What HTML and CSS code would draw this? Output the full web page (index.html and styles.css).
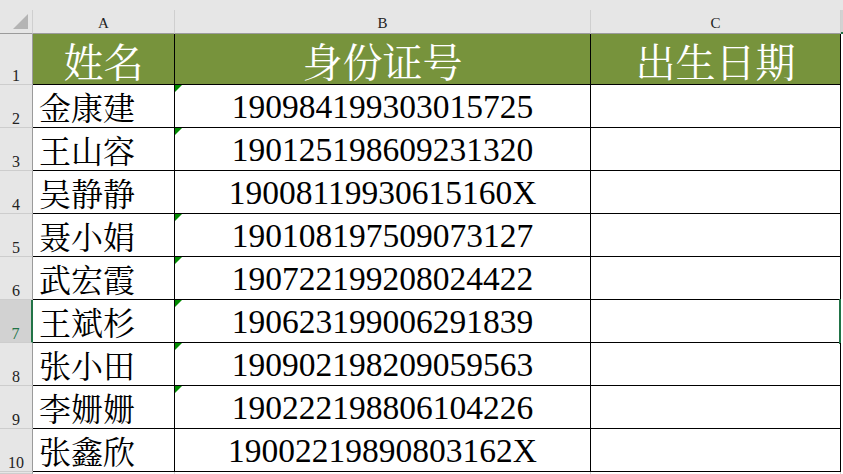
FILE: index.html
```html
<!DOCTYPE html>
<html lang="zh-CN">
  <head>
    <meta charset="UTF-8" />
    <title>身份证号 - 出生日期</title>
    <link rel="stylesheet" href="styles.css">
  </head>
  <body>
    <div class="sheet">
      <div class="strip"></div>

      <div class="row">
        <div class="corner"><span class="corner-mark"></span></div>
        <div class="col-head">A</div>
        <div class="col-head">B</div>
        <div class="col-head">C</div>
        <div class="col-head col-sel"></div>
      </div>

      <div class="row">
        <div class="row-head">1</div>
        <div class="cell title">姓名</div>
        <div class="cell title">身份证号</div>
        <div class="cell title">出生日期</div>
        <div class="pad"></div>
      </div>

      <div class="row">
        <div class="row-head">2</div>
        <div class="cell name">金康建</div>
        <div class="cell id txt">190984199303015725</div>
        <div class="cell"></div>
        <div class="pad"></div>
      </div>

      <div class="row">
        <div class="row-head">3</div>
        <div class="cell name">王山容</div>
        <div class="cell id txt">190125198609231320</div>
        <div class="cell"></div>
        <div class="pad"></div>
      </div>

      <div class="row">
        <div class="row-head">4</div>
        <div class="cell name">吴静静</div>
        <div class="cell id">19008119930615160X</div>
        <div class="cell"></div>
        <div class="pad"></div>
      </div>

      <div class="row">
        <div class="row-head">5</div>
        <div class="cell name">聂小娟</div>
        <div class="cell id txt">190108197509073127</div>
        <div class="cell"></div>
        <div class="pad"></div>
      </div>

      <div class="row">
        <div class="row-head">6</div>
        <div class="cell name">武宏霞</div>
        <div class="cell id txt">190722199208024422</div>
        <div class="cell"></div>
        <div class="pad"></div>
      </div>

      <div class="row">
        <div class="row-head row-sel">7</div>
        <div class="cell name">王斌杉</div>
        <div class="cell id txt">190623199006291839</div>
        <div class="cell"></div>
        <div class="pad active"></div>
      </div>

      <div class="row">
        <div class="row-head">8</div>
        <div class="cell name">张小田</div>
        <div class="cell id txt">190902198209059563</div>
        <div class="cell"></div>
        <div class="pad"></div>
      </div>

      <div class="row">
        <div class="row-head">9</div>
        <div class="cell name">李姗姗</div>
        <div class="cell id txt">190222198806104226</div>
        <div class="cell"></div>
        <div class="pad"></div>
      </div>

      <div class="row">
        <div class="row-head">10</div>
        <div class="cell name">张鑫欣</div>
        <div class="cell id">19002219890803162X</div>
        <div class="cell"></div>
        <div class="pad"></div>
      </div>

      <div class="row">
        <div class="row-head"></div>
        <div class="cell empty"></div>
        <div class="cell empty"></div>
        <div class="cell empty"></div>
        <div class="pad"></div>
      </div>
    </div>
  </body>
</html>
```

FILE: styles.css
```css
* {
  box-sizing: border-box;
}

body {
  margin: 0;
  height: 474px;
  overflow: hidden;
  background: #fff;
  font-family: "Liberation Serif", "Times New Roman", serif;
}

.sheet {
  display: grid;
  grid-template-columns: 33px 142px 416px 250px 1fr;
  grid-template-rows: 10px 24px 51px repeat(9, 43px) 1fr;
  height: 474px;
}

.row {
  display: contents;
}

.strip {
  grid-column: 1 / -1;
  background: #e6e6e6;
}

/* headers */
.corner {
  display: flex;
  justify-content: flex-end;
  align-items: flex-end;
  padding: 0 4px 4px 0;
  background: #e6e6e6;
  border-right: 1px solid #cfcfcf;
  border-bottom: 1px solid #9b9b9b;
}

.corner-mark {
  width: 0;
  height: 0;
  border-left: 15px solid transparent;
  border-bottom: 15px solid #b4b4b4;
}

.col-head {
  display: flex;
  justify-content: center;
  align-items: flex-end;
  padding-bottom: 2px;
  background: #e6e6e6;
  border-right: 1px solid #cfcfcf;
  border-bottom: 1px solid #9b9b9b;
  color: #222;
  font-size: 15px;
  line-height: 1;
}

.col-sel {
  background: #d2d2d2;
  border-right: none;
  border-bottom: 2px solid #217346;
}

.row-head {
  display: flex;
  justify-content: center;
  align-items: flex-end;
  background: #e6e6e6;
  border-right: 1px solid #9b9b9b;
  border-bottom: 1px solid #cdcdcd;
  color: #222;
  font-size: 16px;
  line-height: 1;
}

.row-sel {
  background: #d2d2d2;
  color: #217346;
  border-right: 2px solid #217346;
}

/* cells */
.cell {
  position: relative;
  display: flex;
  align-items: flex-end;
  border-right: 1px solid #000;
  border-bottom: 1px solid #000;
  color: #000;
}

.cell.empty {
  border-right-color: #d4d4d4;
  border-bottom: none;
}

.title {
  justify-content: center;
  padding-bottom: 4px;
  background: #77933c;
  color: #fff;
  font-family: "Noto Serif CJK SC", "Noto Sans CJK SC", sans-serif;
  font-size: 40px;
  line-height: 1;
}

.name {
  padding: 0 0 5px 6px;
  font-family: "Noto Serif CJK SC", "Noto Sans CJK SC", sans-serif;
  font-size: 32px;
  line-height: 1;
}

.id {
  justify-content: center;
  padding-bottom: 4px;
  font-size: 33.5px;
  line-height: 1;
}

/* number stored as text */
.txt::before {
  content: "";
  position: absolute;
  top: 0;
  left: 0;
  border-top: 7px solid #008a00;
  border-right: 7px solid transparent;
}

.pad {
  position: relative;
}

.active::before {
  content: "";
  position: absolute;
  top: -1px;
  bottom: -1px;
  left: -2px;
  width: 2px;
  background: #217346;
}
```
